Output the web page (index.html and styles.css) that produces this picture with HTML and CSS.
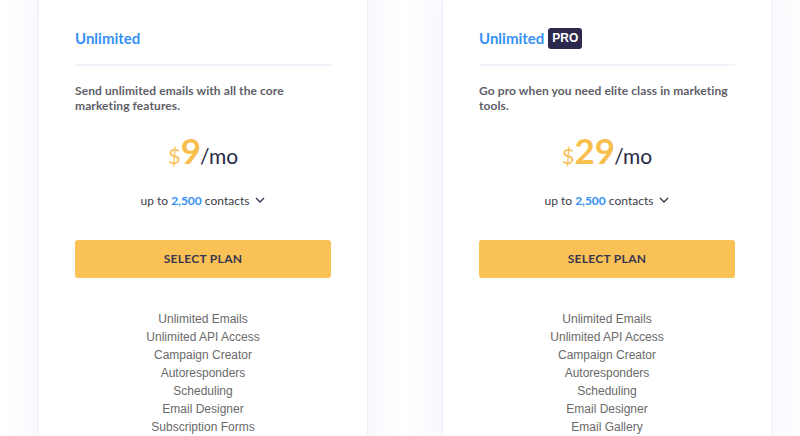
FILE: index.html
```html
<!DOCTYPE html>
<html lang="en">
<head>
    <meta charset="UTF-8">
    <meta name="viewport" content="width=device-width, initial-scale=1.0">
    <title>Pricing</title>
    <link rel="stylesheet" href="styles.css">
</head>
<body>
    <div class="plans">
        <div class="plan">
            <h3 class="plan-name">Unlimited</h3>
            <p class="plan-desc">Send unlimited emails with all the core marketing features.</p>
            <div class="price"><span class="currency">$</span><span class="amount">9</span><span class="period">/mo</span></div>
            <div class="contacts">up to <strong>2,500</strong> contacts
                <svg class="chevron" width="10" height="6" viewBox="0 0 10 6"><path d="M1 1l4 4 4-4" fill="none" stroke="#333a55" stroke-width="1.4"/></svg>
            </div>
            <button class="select-btn">SELECT PLAN</button>
            <ul class="features">
                <li>Unlimited Emails</li>
                <li>Unlimited API Access</li>
                <li>Campaign Creator</li>
                <li>Autoresponders</li>
                <li>Scheduling</li>
                <li>Email Designer</li>
                <li>Subscription Forms</li>
            </ul>
        </div>

        <div class="plan">
            <h3 class="plan-name">Unlimited <span class="badge">PRO</span></h3>
            <p class="plan-desc">Go pro when you need elite class in marketing tools.</p>
            <div class="price"><span class="currency">$</span><span class="amount">29</span><span class="period">/mo</span></div>
            <div class="contacts">up to <strong>2,500</strong> contacts
                <svg class="chevron" width="10" height="6" viewBox="0 0 10 6"><path d="M1 1l4 4 4-4" fill="none" stroke="#333a55" stroke-width="1.4"/></svg>
            </div>
            <button class="select-btn">SELECT PLAN</button>
            <ul class="features">
                <li>Unlimited Emails</li>
                <li>Unlimited API Access</li>
                <li>Campaign Creator</li>
                <li>Autoresponders</li>
                <li>Scheduling</li>
                <li>Email Designer</li>
                <li>Email Gallery</li>
            </ul>
        </div>
    </div>
</body>
</html>
```

FILE: styles.css
```css
body {
    margin: 0;
    background-color: #fff;
    font-family: Lato, "Noto Sans", sans-serif;
    overflow: hidden;
}

.plans {
    display: flex;
    gap: 74px;
    padding-left: 38px;
    margin-top: -33px;
}

.plan {
    width: 256px;
    padding: 48px 36px 40px;
    background-color: #fff;
    border: 1px solid #eef0fb;
    border-radius: 6px;
    box-shadow: 0 0 40px rgba(90, 110, 230, 0.09);
}

.plan-name {
    margin: 0;
    height: 44px;
    display: flex;
    align-items: center;
    gap: 4px;
    font-size: 15px;
    font-weight: 700;
    color: #3591f3;
    border-bottom: 2px solid #f0f3f9;
    padding-bottom: 4px;
    box-sizing: content-box;
}

.badge {
    background-color: #2b2a4e;
    color: #fff;
    font-family: "Liberation Sans", Arial, sans-serif;
    font-size: 12px;
    font-weight: 700;
    padding: 3px 4px;
    border-radius: 3px;
    line-height: 15px;
}

.plan-desc {
    margin: 17px 0 0;
    font-size: 12px;
    font-weight: 700;
    letter-spacing: 0.1px;
    line-height: 15px;
    color: #5e5e68;
}

.price {
    margin-top: 17px;
    text-align: center;
    line-height: 40px;
    height: 40px;
}

.currency {
    font-size: 22px;
    color: #f9c35c;
}

.amount {
    font-size: 35px;
    font-weight: 700;
    color: #f8bf4f;
}

.period {
    margin-left: -1px;
    font-size: 21px;
    color: #272946;
}

.contacts {
    margin-top: 23px;
    text-align: center;
    font-size: 12px;
    color: #3c3c4a;
}

.contacts strong {
    color: #3591f3;
}

.chevron {
    margin-left: 3px;
    vertical-align: 2px;
}

.select-btn {
    display: block;
    width: 100%;
    margin-top: 32px;
    height: 38px;
    padding-bottom: 2px;
    background-color: #f9c156;
    border: none;
    border-radius: 3px;
    font-family: Lato, "Noto Sans", sans-serif;
    font-size: 12px;
    font-weight: 700;
    letter-spacing: 0.3px;
    color: #363850;
    cursor: pointer;
}

.features {
    list-style: none;
    margin: 32px 0 0;
    padding: 0;
    text-align: center;
    font-family: "Liberation Sans", Arial, sans-serif;
    font-size: 12px;
    line-height: 18px;
    color: #6a6a6a;
}
```
